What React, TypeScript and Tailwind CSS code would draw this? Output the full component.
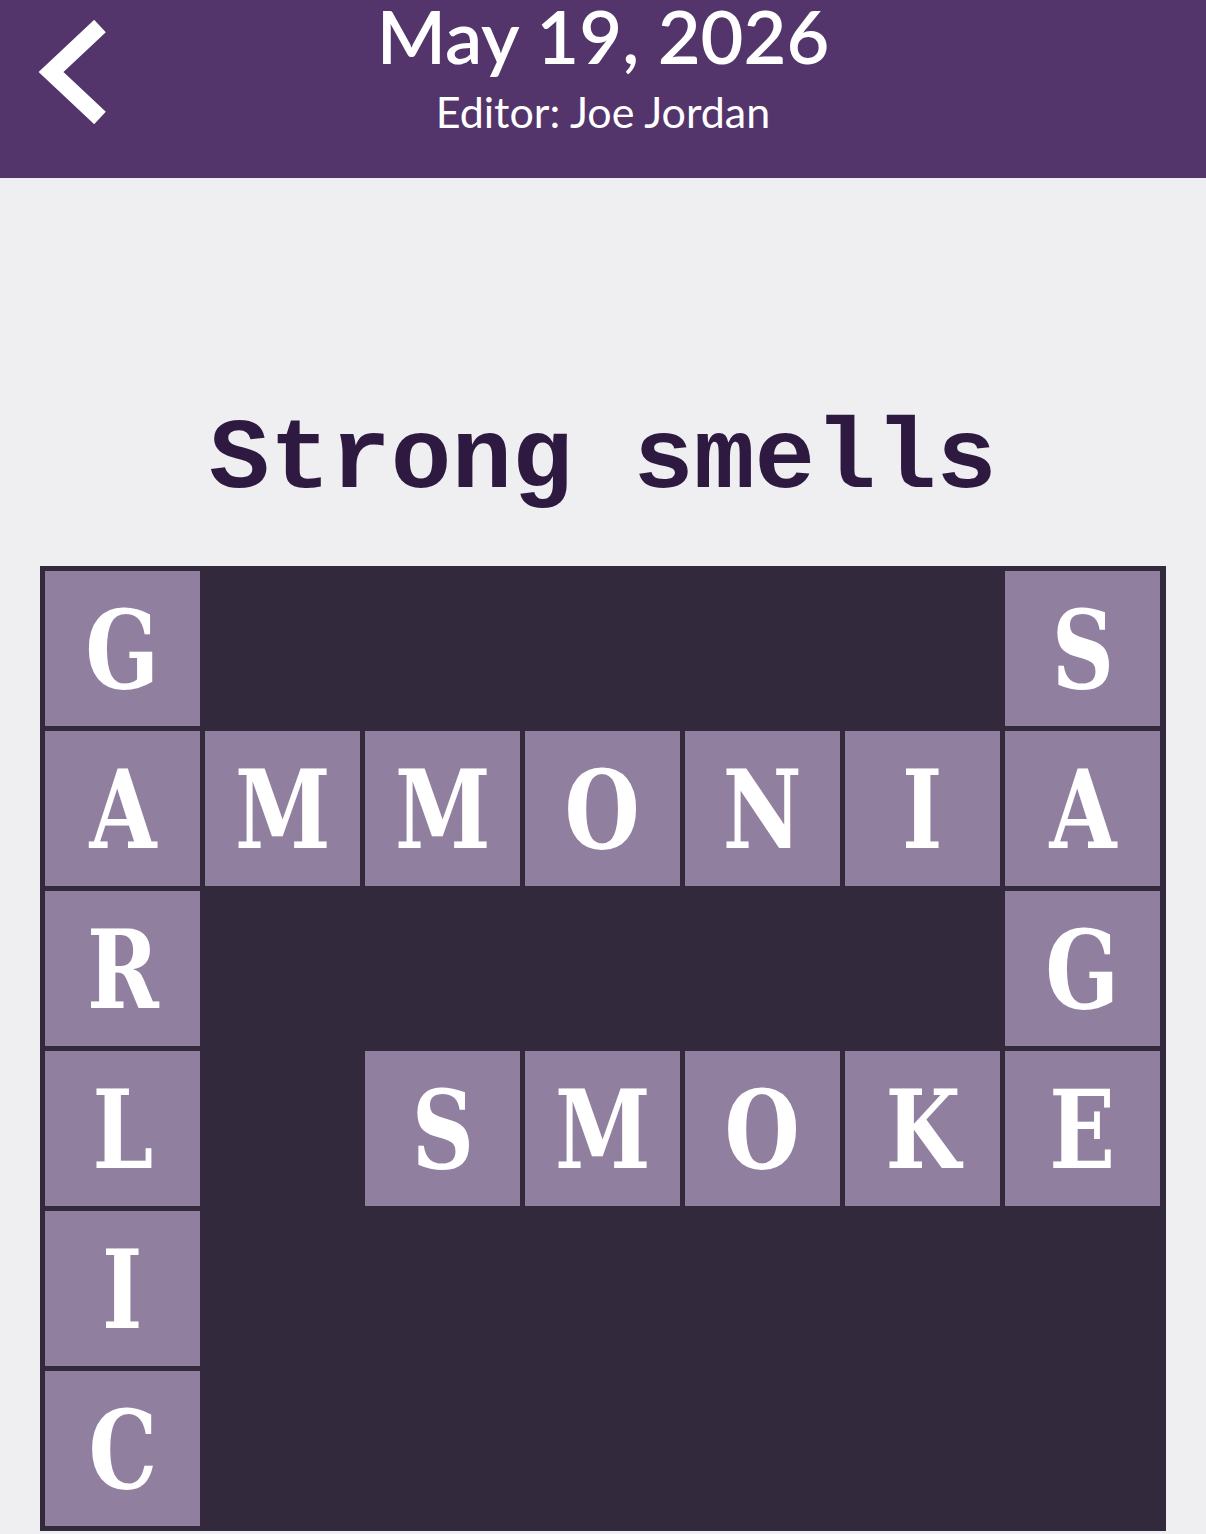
import React from "react";

const ROWS = [
  "G.....S",
  "AMMONIA",
  "R.....G",
  "L.SMOKE",
  "I......",
  "C......",
];

function BackChevron() {
  return (
    <svg width="70" height="104" viewBox="0 0 70 104" className="absolute left-[38px] top-[20px]">
      <polyline points="62,6 13,52 62,98" fill="none" stroke="#ffffff" strokeWidth="17" strokeLinejoin="miter" strokeLinecap="butt" />
    </svg>
  );
}

export default function App() {
  return (
    <div className="w-[1206px] h-[1534px] bg-[#efeff2] overflow-hidden flex flex-col">
      <header className="relative h-[178px] bg-[#53346b] flex flex-col items-center text-white shrink-0">
        <BackChevron />
        <div className="mt-[-1px] text-[74px] leading-[74px] font-semibold font-['Lato','Noto_Sans',sans-serif]">
          May 19, 2026
        </div>
        <div className="mt-[17px] text-[43px] leading-[43px] font-['Lato','Noto_Sans',sans-serif]">
          Editor: Joe Jordan
        </div>
      </header>

      <div className="h-[388px] flex items-end justify-center pb-[55px]">
        <h1 className="text-[101px] leading-[101px] font-bold text-[#2e1a40] font-['Liberation_Mono','Courier_New',monospace]">
          Strong smells
        </h1>
      </div>

      <div className="ml-[40px] w-[1126px] bg-[#322a3c] p-[5px] grid grid-cols-[repeat(7,155px)] grid-rows-[repeat(6,155px)] gap-[5px]">
        {ROWS.flatMap((row, r) =>
          row.split("").map((ch, c) =>
            ch === "." ? (
              <div key={`${r}-${c}`} />
            ) : (
              <div
                key={`${r}-${c}`}
                className="bg-[#917fa0] flex items-center justify-center text-white text-[108px] leading-none font-bold font-['DejaVu_Serif',serif]"
              >
                <span className="mt-[2px] scale-x-[0.8] inline-block">{ch}</span>
              </div>
            )
          )
        )}
      </div>
    </div>
  );
}
